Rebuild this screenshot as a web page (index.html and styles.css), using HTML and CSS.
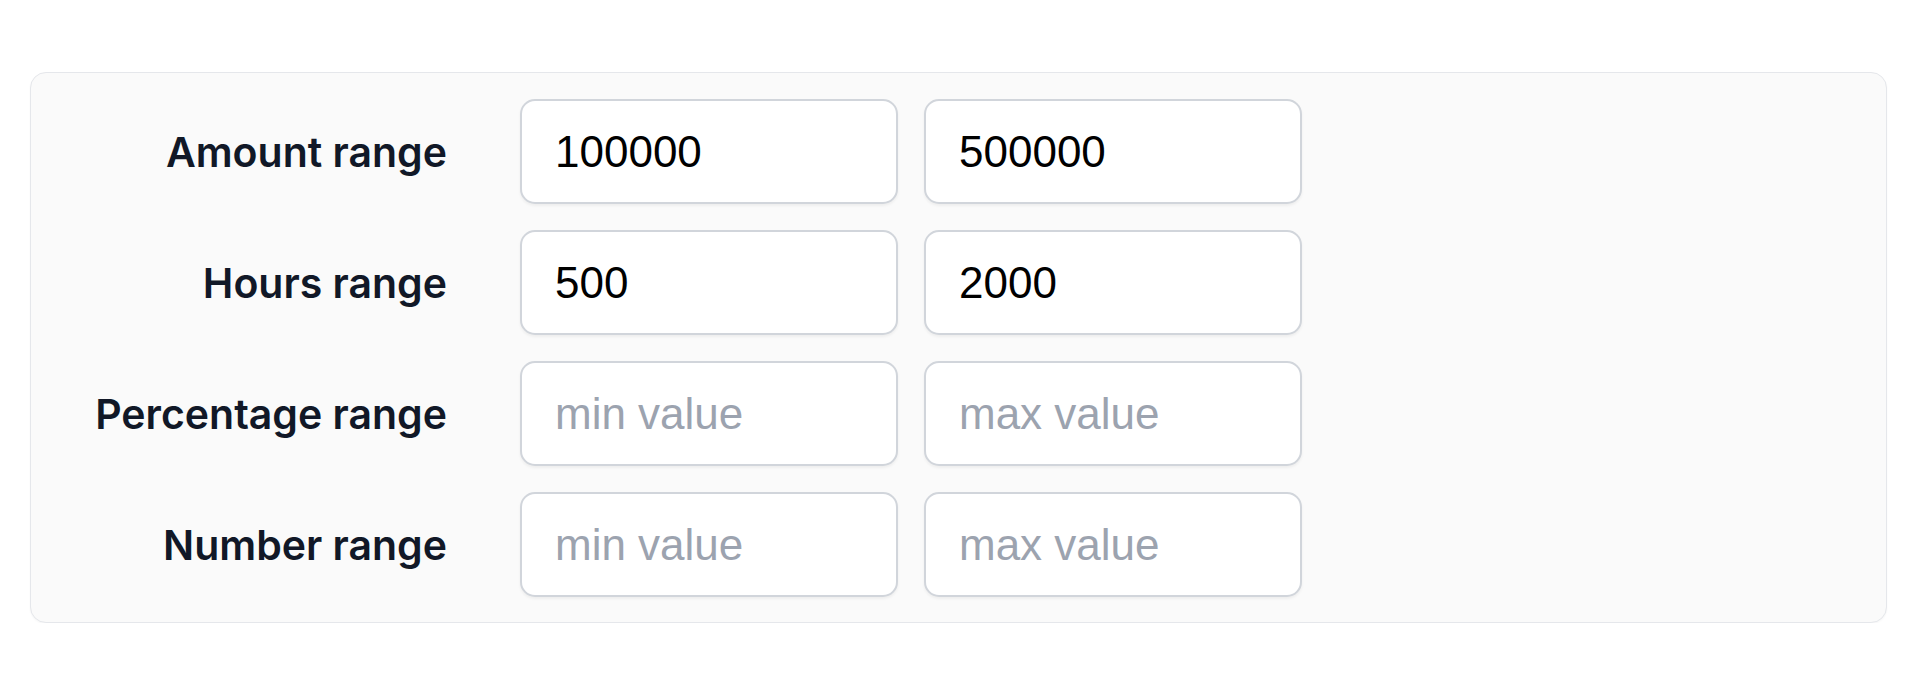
FILE: index.html
```html
<!DOCTYPE html>
<html lang="en">
<head>
<meta charset="utf-8">
<title>Range filters</title>
<link rel="stylesheet" href="styles.css">
</head>
<body>
<div class="page">
  <form class="card">
    <div class="row">
      <label class="label">Amount range</label>
      <input class="field" type="text" value="100000" placeholder="min value">
      <input class="field" type="text" value="500000" placeholder="max value">
    </div>
    <div class="row">
      <label class="label">Hours range</label>
      <input class="field" type="text" value="500" placeholder="min value">
      <input class="field" type="text" value="2000" placeholder="max value">
    </div>
    <div class="row">
      <label class="label">Percentage range</label>
      <input class="field" type="text" value="" placeholder="min value">
      <input class="field" type="text" value="" placeholder="max value">
    </div>
    <div class="row">
      <label class="label">Number range</label>
      <input class="field" type="text" value="" placeholder="min value">
      <input class="field" type="text" value="" placeholder="max value">
    </div>
  </form>
</div>
</body>
</html>
```
FILE: styles.css
```css
* { box-sizing: border-box; }
html, body { margin: 0; background: #ffffff; }
.page {
  padding: 72px 33px 0 30px;
}
.card {
  margin: 0;
  background: #fafafa;
  border: 1px solid #e5e7eb;
  border-radius: 16px;
  box-shadow: 0 1px 2px rgba(0, 0, 0, 0.04);
  padding: 26px 26px 25px 26px;
  display: flex;
  flex-direction: column;
  gap: 26px;
}
.row {
  display: grid;
  grid-template-columns: 437px 378px 378px;
  column-gap: 26px;
  align-items: center;
}
.label {
  text-align: right;
  padding-right: 47px;
  font-family: Inter, "Noto Sans", sans-serif;
  font-weight: 600;
  font-size: 41px;
  color: #111827;
  white-space: nowrap;
}
.field {
  height: 105px;
  width: 378px;
  background: #ffffff;
  border: 2px solid #d1d5db;
  border-radius: 15px;
  box-shadow: 0 2px 3px rgba(0, 0, 0, 0.05);
  padding: 0 20px 0 33px;
  font-family: "Liberation Sans", Arial, sans-serif;
  font-size: 44px;
  color: #000000;
  outline: none;
}
.field::placeholder {
  color: #9ca3af;
  opacity: 1;
}
```
